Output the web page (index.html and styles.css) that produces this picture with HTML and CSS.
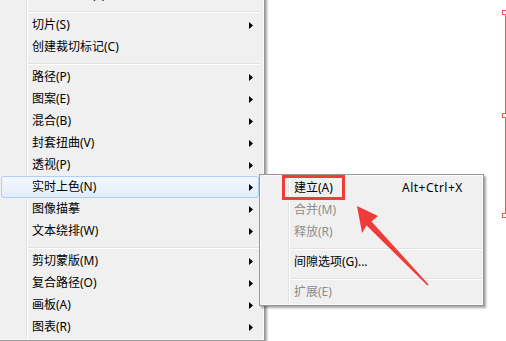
FILE: index.html
```html
<!DOCTYPE html>
<html lang="zh-CN">
<head>
  <meta charset="UTF-8" />
  <meta name="viewport" content="width=device-width, initial-scale=1.0" />
  <title>对象菜单 - 实时上色</title>
  <link rel="stylesheet" href="styles.css">
</head>
<body>
  <div class="menu main">
    <div class="item">拼合透明度(F)</div>
    <div class="sep"></div>
    <div class="item more">切片(S)</div>
    <div class="item">创建裁切标记(C)</div>
    <div class="sep"></div>
    <div class="item more">路径(P)</div>
    <div class="item more">图案(E)</div>
    <div class="item more">混合(B)</div>
    <div class="item more">封套扭曲(V)</div>
    <div class="item more">透视(P)</div>
    <div class="item more hot">实时上色(N)</div>
    <div class="item more">图像描摹</div>
    <div class="item more">文本绕排(W)</div>
    <div class="sep"></div>
    <div class="item more">剪切蒙版(M)</div>
    <div class="item more">复合路径(O)</div>
    <div class="item more">画板(A)</div>
    <div class="item more">图表(R)</div>
  </div>

  <div class="menu popup">
    <div class="item"><span class="label">建立(A)</span><span class="key">Alt+Ctrl+X</span></div>
    <div class="item off">合并(M)</div>
    <div class="item off">释放(R)</div>
    <div class="sep"></div>
    <div class="item">间隙选项(G)...</div>
    <div class="sep"></div>
    <div class="item off">扩展(E)</div>
  </div>

  <!-- annotation on top of the screenshot -->
  <div class="mark"></div>
  <svg class="pointer" width="506" height="341" viewBox="0 0 506 341">
    <polygon points="357,206 378,216 371.5,221.5 428.6,284.4 427.4,285.6 366.5,225.5 362,233" fill="#f03b3b" />
  </svg>

  <!-- selected object edge on the canvas -->
  <div class="bounds">
    <span class="handle top"></span>
    <span class="handle mid"></span>
    <span class="handle end"></span>
  </div>
</body>
</html>
```

FILE: styles.css
```css
* {
  box-sizing: border-box;
}
body {
  margin: 0;
  height: 341px;
  overflow: hidden;
  position: relative;
  background: #fff;
  font-family: "Noto Sans", "Noto Sans CJK SC", sans-serif;
  font-size: 12px;
  color: #000;
}
.menu {
  border: 1px solid #979797;
  padding: 2px 0;
  background:
    linear-gradient(to right, transparent 28px, #e2e3e3 28px, #e2e3e3 29px, #fff 29px, #fff 30px, transparent 30px),
    #f0f0f0;
  box-shadow: inset 0 0 0 1px #fafafa, 2px 2px 2px rgba(0,0,0,0.35);
}
.main {
  width: 268px;
  margin: -19px 0 0 -3px;
}
.popup {
  position: absolute;
  left: 259px;
  top: 174px;
  width: 225px;
}
.item {
  position: relative;
  display: flex;
  align-items: center;
  height: 22px;
  line-height: 20px;
  margin: 0 3px;
  padding-left: 30px;
  border: 1px solid transparent;
  border-radius: 3px;
  white-space: nowrap;
}
.main .item {
  margin-right: 5px;
}
.more::after {
  content: "";
  position: absolute;
  right: 5px;
  top: 7px;
  width: 4px;
  height: 7px;
  background: #000;
  clip-path: polygon(0 0, 100% 50%, 0 100%);
}
.hot {
  border-color: #aecff7;
  background: linear-gradient(#f4f8fd, #e2edfb);
}
.off {
  color: #8d8d8d;
}
.label {
  width: 108px;
}
.key {
  letter-spacing: 0.5px;
}
.sep {
  height: 8px;
  margin: 0 1px 0 30px;
  background: linear-gradient(transparent 5px, #e0e0e0 5px, #e0e0e0 6px, #fff 6px, #fff 7px, transparent 7px);
}
.main .sep {
  margin-right: 4px;
}
.main .sep:first-of-type {
  background-position: 0 1px;
}
.mark {
  position: absolute;
  left: 282px;
  top: 175px;
  width: 63px;
  height: 25px;
  border: 3px solid #f03b3b;
}
.pointer {
  position: absolute;
  left: 0;
  top: 0;
}
.bounds {
  position: absolute;
  left: 505px;
  top: 12px;
  width: 1px;
  height: 204px;
  background: #f05555;
}
.handle {
  position: absolute;
  left: -3px;
  width: 5px;
  height: 5px;
  border: 1px solid #f05555;
  background: #fff;
}
.handle.top {
  top: -2px;
}
.handle.mid {
  top: 101px;
}
.handle.end {
  top: 201px;
}
```
